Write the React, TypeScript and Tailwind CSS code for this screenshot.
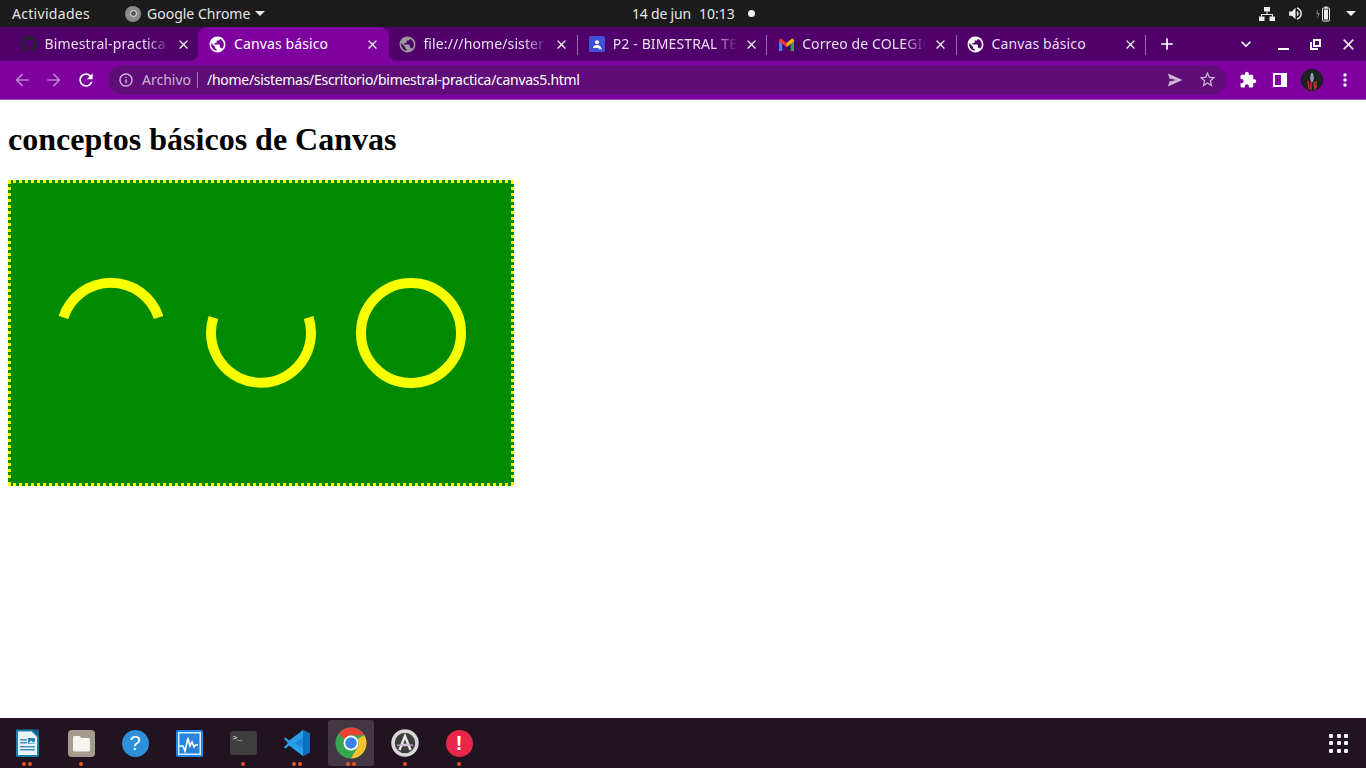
import { MdClose, MdExtension, MdMoreVert, MdPublic, MdStarBorder, MdVolumeUp, MdAdd, MdExpandMore, MdInfoOutline, MdArrowBack, MdArrowForward, MdRefresh } from "react-icons/md";
import { FaGithub } from "react-icons/fa";

const uiFont = "font-['Noto_Sans',sans-serif]";

const ClassroomIcon = () => (
  <svg width="16" height="16" viewBox="0 0 16 16">
    <rect width="16" height="16" rx="1.5" fill="#3f51d9" />
    <circle cx="8" cy="6.2" r="2" fill="#fff" />
    <path d="M4 12c0-2 2-3 4-3s4 1 4 3z" fill="#fff" />
    <rect x="9.5" y="12.3" width="3.5" height="1" fill="#fff" />
  </svg>
);

const GmailIcon = () => (
  <svg width="15" height="13" viewBox="0 0 15 13">
    <path d="M0 2v11h3.200V5.500z" fill="#4a7df0" />
    <path d="M11.800 5.500V13H15V2z" fill="#2fa84f" />
    <path d="M0 2 1.700.3 7.500 5l1 3-1 1L0 3.500z" fill="#ea3535" />
    <path d="M7.500 5 13.300.3 15 2v1.500L7.500 9z" fill="#f6b70e" />
  </svg>
);

const tabs = [
  { title: "Bimestral-practica", icon: <FaGithub className="text-[#26222b]" size={16} />, fade: true },
  { title: "Canvas básico", icon: <MdPublic className="text-white" size={19} />, active: true },
  { title: "file:///home/sister", icon: <MdPublic className="text-[#9a9a9a]" size={19} />, fade: true, sep: true },
  { title: "P2 - BIMESTRAL TE", icon: <ClassroomIcon />, fade: true, sep: true },
  { title: "Correo de COLEGIO", icon: <GmailIcon />, fade: true, sep: true },
  { title: "Canvas básico", icon: <MdPublic className="text-white" size={19} />, sep: true },
];

const Tab = ({ title, icon, active, fade, sep }: { title: string; icon: React.ReactNode; active?: boolean; fade?: boolean; sep?: boolean }) => (
  <div className="relative flex h-full w-[189.4px] shrink-0 items-center">
    {active && (
      <>
        <div className="absolute inset-y-0 left-0 right-[-2px] rounded-t-[9px] bg-[#7e009f]" />
        <div className="absolute bottom-0 left-[-8px] h-2 w-2 bg-[#7e009f]">
          <div className="h-full w-full rounded-br-lg bg-[#50006a]" />
        </div>
        <div className="absolute bottom-0 right-[-10px] h-2 w-2 bg-[#7e009f]">
          <div className="h-full w-full rounded-bl-lg bg-[#50006a]" />
        </div>
      </>
    )}
    <div className="relative flex w-[36px] shrink-0 items-center justify-center pl-[4px]">{icon}</div>
    <span
      className={`relative mb-[1px] w-[126px] overflow-hidden whitespace-nowrap text-[14px] tracking-[0.12px] ${active ? "text-white" : "text-[#eadff0]"} ${fade ? "[mask-image:linear-gradient(to_right,black_80%,transparent_99%)]" : ""}`}
    >
      {title}
    </span>
    <MdClose className="relative ml-[5px] text-white" size={15} />
    {sep && <div className="absolute right-[-1px] top-[8px] h-[20px] w-px bg-[#9a6cab]" />}
  </div>
);

const ChromeLogo = () => (
  <svg width="32" height="32" viewBox="0 0 32 32">
    <circle cx="16" cy="16" r="15.500" fill="#34a853" />
    <path d="M16 .5a15.500 15.500 0 0 1 13.400 7.750H16a7.750 7.750 0 0 0-6.700 3.900L3.900 6.500A15.500 15.500 0 0 1 16 .5z" fill="#ea4335" />
    <path d="M29.400 8.250A15.500 15.500 0 0 1 16 31.500l6.700-11.600A7.750 7.750 0 0 0 22.700 12z" fill="#fbc02d" />
    <circle cx="16" cy="16" r="7.500" fill="#fff" />
    <circle cx="16" cy="16" r="5.800" fill="#3b82e6" />
  </svg>
);

const dockItems = [
  {
    dots: 2,
    icon: (
      <svg width="23" height="28" viewBox="0 0 23 28">
        <path d="M1 1.500h15l6 6v18.500a1 1 0 0 1-1 1H2a1 1 0 0 1-1-1z" fill="#eef5fa" stroke="#1c7fae" strokeWidth="2" />
        <path d="M16 .5h7v7z" fill="#155f86" />
        <rect x="4" y="10" width="7" height="1.500" fill="#3a93c5" />
        <rect x="4" y="13" width="7" height="1.500" fill="#3a93c5" />
        <rect x="4" y="17" width="15" height="1.500" fill="#3a93c5" />
        <rect x="4" y="20" width="15" height="1.500" fill="#3a93c5" />
        <rect x="12" y="9" width="7" height="6" fill="#2b7fb0" />
        <path d="M12.500 14.500l2.500-3 2 2 2-1v2z" fill="#e3f0f7" />
      </svg>
    ),
  },
  {
    dots: 1,
    icon: (
      <svg width="27" height="27" viewBox="0 0 27 27">
        <rect width="27" height="27" rx="4" fill="#a39b8b" />
        <path d="M5 7.500a1.500 1.500 0 0 1 1.500-1.500h5l2 2h7a1.500 1.500 0 0 1 1.500 1.500V20a1.500 1.500 0 0 1-1.500 1.500h-14A1.500 1.500 0 0 1 5 20z" fill="#f6f4f0" />
      </svg>
    ),
  },
  {
    dots: 0,
    icon: (
      <div className="flex h-[27px] w-[27px] items-center justify-center rounded-full bg-[#2f8fd8] font-['Liberation_Sans',sans-serif] text-[20px] text-white">?</div>
    ),
  },
  {
    dots: 0,
    icon: (
      <svg width="27" height="27" viewBox="0 0 27 27">
        <rect width="27" height="27" rx="2" fill="#1e88f0" />
        <rect x="2" y="2" width="23" height="23" fill="#d8edfb" />
        <rect x="3.500" y="3.500" width="20" height="20" fill="#2b83d9" />
        <path d="M3.500 16h3.500l2 5 3-13 2 8 2-4 2 5 1.500-2h2.500" fill="none" stroke="#fff" strokeWidth="1.600" />
      </svg>
    ),
  },
  {
    dots: 1,
    icon: (
      <div className="flex h-[24px] w-[27px] items-start rounded-[3px] bg-[#3e3e3e] pl-[3px] pt-[2px] font-['Liberation_Mono',monospace] text-[8px] leading-[10px] text-white">
        &gt;_
      </div>
    ),
  },
  {
    dots: 2,
    icon: (
      <svg width="28" height="28" viewBox="0 0 28 28">
        <path d="M20 1 27 4.500v19L20 27 8 15.500z" fill="#1e88d8" />
        <path d="M20 1v26l7-3.500v-19z" fill="#0f6fbf" />
        <path d="M20 8.500 12 14l8 5.500V27L6 16.500 2.500 19.500 .8 18.500 5 14 .8 9.500 2.500 8.500 6 11.500 20 1z" fill="#27a0ea" />
      </svg>
    ),
  },
  { dots: 2, active: true, icon: <ChromeLogo /> },
  {
    dots: 1,
    icon: (
      <svg width="28" height="28" viewBox="0 0 28 28">
        <circle cx="14" cy="14" r="12" fill="#3d3d3d" stroke="#d8d8d8" strokeWidth="3.500" />
        <path d="M8.500 21 14 7l5.500 14M10.500 16h7" fill="none" stroke="#e8e8e8" strokeWidth="2.400" />
        <rect x="6" y="15.500" width="16" height="1.300" fill="#c9a4d9" />
      </svg>
    ),
  },
  {
    dots: 1,
    icon: (
      <div className="flex h-[27px] w-[27px] items-center justify-center rounded-full bg-[#e8274b] font-['Liberation_Sans',sans-serif] text-[21px] font-bold text-white">!</div>
    ),
  },
];

const App = () => {
  return (
    <div className={`flex h-screen w-full flex-col overflow-hidden bg-white ${uiFont}`}>
      {/* barra de gnome */}
      <div className="flex h-[27px] shrink-0 items-center bg-[#1c1c1c] text-[14px] text-[#e6e6e6]">
        <div className="flex w-[632px] items-center pl-[12px]">
          <span className="w-[113px] tracking-[0.3px]">Actividades</span>
          <div className="flex h-[16px] w-[16px] items-center justify-center rounded-full bg-[#8a8a8a]">
            <div className="h-[7px] w-[7px] rounded-full border border-[#eee] bg-[#555]" />
          </div>
          <span className="ml-[6px]">Google Chrome</span>
          <div className="ml-[5px] h-0 w-0 border-x-[5px] border-t-[5px] border-x-transparent border-t-[#e6e6e6]" />
        </div>
        <span className="tracking-[-0.2px]">14 de jun</span>
        <span className="ml-[8px]">10:13</span>
        <div className="ml-[13px] h-[7px] w-[7px] rounded-full bg-[#eee]" />
        <div className="flex flex-1 items-center justify-end pr-[10px]">
          <svg width="16" height="14" viewBox="0 0 16 14" fill="#eee">
            <rect x="5" y="0" width="6" height="4.500" />
            <rect x="0" y="9.500" width="5.500" height="4.500" />
            <rect x="10.500" y="9.500" width="5.500" height="4.500" />
            <path d="M7.500 4.500h1V7H14v2.500h-1V8H3v1.500H2V7h5.500z" />
          </svg>
          <MdVolumeUp className="ml-[12px] text-[#eee]" size={17} />
          <svg className="ml-[11px]" width="16" height="16" viewBox="0 0 16 16">
            <path d="M3 3 1 8h2l-1 5 3-6H3z" fill="#777" />
            <rect x="7.500" y="2" width="7" height="13" rx="1" fill="none" stroke="#eee" strokeWidth="1" />
            <rect x="9.500" y="0.500" width="3" height="2" fill="#eee" />
            <rect x="9" y="3.500" width="4" height="10" fill="#eee" />
          </svg>
          <div className="ml-[15px] h-0 w-0 border-x-[5px] border-t-[5px] border-x-transparent border-t-[#eee]" />
        </div>
      </div>

      {/* pestañas */}
      <div className="flex h-[34px] shrink-0 items-center bg-[#50006a] pl-[8.6px] text-white">
        {tabs.map((t, i) => (
          <Tab key={i} {...t} />
        ))}
        <MdAdd className="ml-[12px]" size={20} />
        <MdExpandMore className="ml-[59px]" size={20} />
        <div className="ml-[22px] mt-[9px] h-[2px] w-[11px] bg-white" />
        <svg className="ml-[21px]" width="11" height="11" viewBox="0 0 11 11" fill="none" stroke="#fff" strokeWidth="2">
          <rect x="4" y="1" width="6" height="6" />
          <path d="M1 3v7h7" />
        </svg>
        <svg className="ml-[22px]" width="11" height="11" viewBox="0 0 11 11" fill="none" stroke="#e4dbe8" strokeWidth="1.800">
          <path d="M.7.7l9.600 9.600M10.300.7.7 10.300" />
        </svg>
      </div>

      {/* barra de direcciones */}
      <div className="flex h-[38px] shrink-0 items-center pb-[1px] bg-[#7e009f] text-white">
        <MdArrowBack className="ml-[12px] text-[#b87fcd]" size={20} />
        <MdArrowForward className="ml-[12px] text-[#b87fcd]" size={20} />
        <MdRefresh className="ml-[12px]" size={20} />
        <div className="ml-[12px] flex h-[30px] w-[1118px] items-center rounded-full bg-[#610d79] text-[14px]">
          <MdInfoOutline className="ml-[10px] text-[#d3bcdb]" size={16} />
          <span className="ml-[8px] text-[#cdb3d6]">Archivo</span>
          <div className="ml-[6px] h-[16px] w-px bg-[#a57cb3]" />
          <span className="ml-[9px] tracking-[-0.29px] text-white">/home/sistemas/Escritorio/bimestral-practica/canvas5.html</span>
          <div className="flex flex-1 items-center justify-end pr-[9px] text-[#cdb3d6]">
            <svg width="16" height="14" viewBox="0 0 16 14" fill="currentColor">
              <path d="M1 .5 15.500 7 1 13.500l1.500-5L9 7 2.500 5.500z" />
            </svg>
            <MdStarBorder className="ml-[15px]" size={19} />
          </div>
        </div>
        <MdExtension className="ml-[13px]" size={18} />
        <div className="ml-[16px] flex h-[14px] w-[14px] border-2 border-white">
          <div className="ml-auto h-full w-[4px] bg-white" />
        </div>
        <svg className="ml-[14px]" width="22" height="22" viewBox="0 0 22 22">
          <circle cx="11" cy="11" r="11" fill="#1b2320" />
          <path d="M10 4l2 0 1 5-1 4h-2l-1-4z" fill="#8b9aa6" />
          <path d="M7 12l1 8M10 13l0 8M13 13l1 8M15 12l0 7" stroke="#c9322b" strokeWidth="1.500" />
        </svg>
        <MdMoreVert className="ml-[12px]" size={20} />
      </div>
      <div className="h-[1px] shrink-0 bg-[#a94fc4]" />

      {/* pagina */}
      <div className="flex-1 bg-white text-black">
        <h1 className="ml-[8px] mt-[21px] font-['Liberation_Serif',serif] text-[32px] font-bold leading-[37px]">conceptos básicos de Canvas</h1>
        <div className="ml-[8px] mt-[22px] h-[306px] w-[506px] border-[3px] border-dotted border-[#ffff00] bg-[#008a00]">
          <svg width="500" height="300" viewBox="0 0 500 300" fill="none" stroke="#f7ff00" strokeWidth="10">
            <path d="M52.400 134.500A50 50 0 0 1 147.600 134.500" />
            <path d="M202.400 134.500A50 50 0 1 0 297.600 134.500" />
            <circle cx="400" cy="150" r="50" />
          </svg>
        </div>
      </div>

      {/* dock */}
      <div className="flex h-[50px] shrink-0 items-center justify-between bg-[#211420] pl-[4px] pr-[18px]">
        <div className="flex gap-[8px]">
          {dockItems.map((d, i) => (
            <div key={i} className={`relative flex h-[46px] w-[46px] items-center justify-center rounded-[3px] ${d.active ? "bg-[#423742]" : ""}`}>
              {d.icon}
              {d.dots > 0 && (
                <div className="absolute bottom-0 flex gap-[2px]">
                  {Array.from({ length: d.dots }).map((_, k) => (
                    <div key={k} className="h-[4px] w-[4px] rounded-full bg-[#e95420]" />
                  ))}
                </div>
              )}
            </div>
          ))}
        </div>
        <div className="grid grid-cols-3 gap-[3.500px]">
          {Array.from({ length: 9 }).map((_, i) => (
            <div key={i} className="h-[4px] w-[4px] rounded-[1px] bg-[#f2f2f2]" />
          ))}
        </div>
      </div>
    </div>
  );
};

export default App;
